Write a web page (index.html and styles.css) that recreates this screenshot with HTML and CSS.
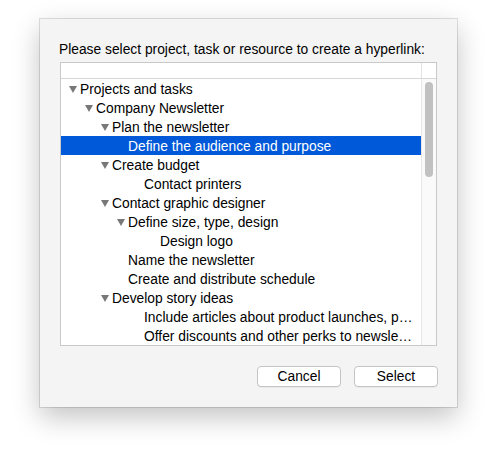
FILE: index.html
```html
<!DOCTYPE html>
<html>
<head>
<meta charset="utf-8">
<link rel="stylesheet" href="styles.css">
</head>
<body>
<div class="dialog">
  <div class="label">Please select project, task or resource to create a hyperlink:</div>
  <div class="listbox">
    <div class="header">
      <div class="hcell main"></div>
      <div class="hcell side"></div>
    </div>
    <div class="body">
      <div class="rows">
        <div class="row l0"><span class="disc"><svg width="8" height="7" viewBox="0 0 8 7"><polygon points="0,0 8,0 4,7" /></svg></span><span class="txt">Projects and tasks</span></div>
        <div class="row l1"><span class="disc"><svg width="8" height="7" viewBox="0 0 8 7"><polygon points="0,0 8,0 4,7" /></svg></span><span class="txt">Company Newsletter</span></div>
        <div class="row l2"><span class="disc"><svg width="8" height="7" viewBox="0 0 8 7"><polygon points="0,0 8,0 4,7" /></svg></span><span class="txt">Plan the newsletter</span></div>
        <div class="row l3 selected"><span class="disc"></span><span class="txt">Define the audience and purpose</span></div>
        <div class="row l2"><span class="disc"><svg width="8" height="7" viewBox="0 0 8 7"><polygon points="0,0 8,0 4,7" /></svg></span><span class="txt">Create budget</span></div>
        <div class="row l4"><span class="disc"></span><span class="txt">Contact printers</span></div>
        <div class="row l2"><span class="disc"><svg width="8" height="7" viewBox="0 0 8 7"><polygon points="0,0 8,0 4,7" /></svg></span><span class="txt">Contact graphic designer</span></div>
        <div class="row l3"><span class="disc"><svg width="8" height="7" viewBox="0 0 8 7"><polygon points="0,0 8,0 4,7" /></svg></span><span class="txt">Define size, type, design</span></div>
        <div class="row l5"><span class="disc"></span><span class="txt">Design logo</span></div>
        <div class="row l3"><span class="disc"></span><span class="txt">Name the newsletter</span></div>
        <div class="row l3"><span class="disc"></span><span class="txt">Create and distribute schedule</span></div>
        <div class="row l2"><span class="disc"><svg width="8" height="7" viewBox="0 0 8 7"><polygon points="0,0 8,0 4,7" /></svg></span><span class="txt">Develop story ideas</span></div>
        <div class="row l4"><span class="disc"></span><span class="txt">Include articles about product launches, p…</span></div>
        <div class="row l4"><span class="disc"></span><span class="txt">Offer discounts and other perks to newsle…</span></div>
      </div>
      <div class="track"><div class="thumb"></div></div>
    </div>
  </div>
  <div class="buttons">
    <button class="btn">Cancel</button>
    <button class="btn">Select</button>
  </div>
</div>
</body>
</html>
```

FILE: styles.css
```css
html {
  margin: 0;
  padding: 0;
  background: #ffffff;
  min-height: 466px;
}
body {
  margin: 0;
  min-height: 466px;
  box-sizing: border-box;
  padding: 19px 0 0 40px;
  font-family: "Liberation Sans", Arial, sans-serif;
  font-size: 13.8px;
  color: #000;
}
.dialog {
  box-sizing: border-box;
  width: 417px;
  height: 388px;
  background: #f4f4f4;
  box-shadow: 0 0 0 1px rgba(0,0,0,0.12), 0 10px 26px rgba(0,0,0,0.24);
  padding: 22px 20px 0 20px;
  display: flex;
  flex-direction: column;
}
.label {
  line-height: 17px;
  height: 16px;
  margin-left: -1px;
  white-space: nowrap;
}
.listbox {
  margin-top: 5px;
  box-sizing: border-box;
  width: 377px;
  height: 284px;
  border: 1px solid #c9c9c9;
  background: #fff;
  display: flex;
  flex-direction: column;
}
.header {
  height: 15px;
  display: flex;
  border-bottom: 1px solid #d6d6d6;
  background: #fff;
}
.hcell.main {
  width: 360px;
  border-right: 1px solid #e2e2e2;
}
.hcell.side {
  flex: 1;
}
.body {
  display: flex;
  flex: 1;
  min-height: 0;
}
.rows {
  width: 360px;
  display: flex;
  flex-direction: column;
}
.row {
  height: 19px;
  line-height: 21px;
  display: flex;
  align-items: flex-start;
  white-space: nowrap;
  overflow: hidden;
}
.row .disc {
  width: 19px;
  flex: none;
  display: flex;
  align-items: center;
  padding-left: 9px;
  box-sizing: border-box;
  height: 19px;
}
.row .disc svg {
  display: block;
  fill: #787878;
  margin-top: 1px;
  margin-left: -1px;
}
.row .txt {
  overflow: hidden;
  text-overflow: ellipsis;
  padding-right: 4px;
}
.l1 { padding-left: 16px; }
.l2 { padding-left: 32px; }
.l3 { padding-left: 48px; }
.l4 { padding-left: 64px; }
.l5 { padding-left: 80px; }
.row.selected {
  background: #0059d8;
  color: #fff;
}
.track {
  flex: 1;
  background: #fafafa;
  border-left: 1px solid #e6e6e6;
  padding: 3px 0 0 3px;
}
.thumb {
  width: 8px;
  height: 95px;
  border-radius: 4px;
  background: #c1c1c1;
}
.buttons {
  margin-top: 20px;
  display: flex;
  justify-content: flex-end;
  gap: 13px;
  margin-right: -1px;
}
.btn {
  width: 84px;
  height: 21px;
  box-sizing: border-box;
  background: #fff;
  border: 1px solid #c4c4c4;
  border-radius: 4px;
  font-family: "Liberation Sans", Arial, sans-serif;
  font-size: 13.8px;
  color: #000;
  padding: 0;
  line-height: 19px;
  box-shadow: 0 1px 0 rgba(0,0,0,0.04);
}
```
